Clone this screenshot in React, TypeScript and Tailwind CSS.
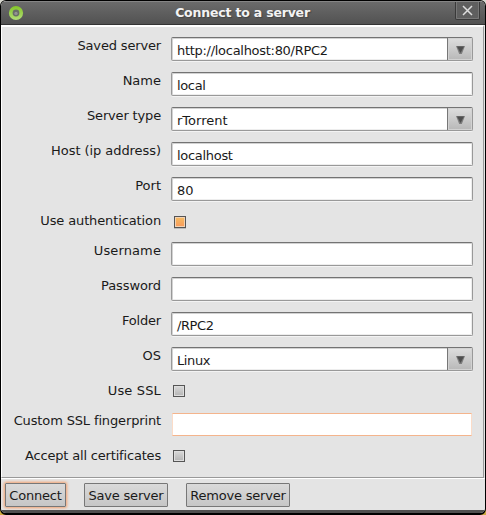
import React from "react";

type Row = {
  label: string;
  kind: "select" | "input" | "check" | "plain";
  value?: string;
  checked?: boolean;
  height: string;
  track?: string;
  valueTrack?: string;
};

const rows: Row[] = [
  { label: "Saved server", kind: "select", value: "http://localhost:80/RPC2", height: "h-[35px]", track: "tracking-[-0.16px]", valueTrack: "tracking-[-0.29px]" },
  { label: "Name", kind: "input", value: "local", height: "h-[35px]", valueTrack: "tracking-[-0.35px]" },
  { label: "Server type", kind: "select", value: "rTorrent", height: "h-[35px]", track: "tracking-[-0.16px]" },
  { label: "Host (ip address)", kind: "input", value: "localhost", height: "h-[35px]", track: "tracking-[-0.06px]", valueTrack: "tracking-[-0.3px]" },
  { label: "Port", kind: "input", value: "80", height: "h-[35px]" },
  { label: "Use authentication", kind: "check", checked: true, height: "h-[30px]", track: "tracking-[-0.12px]" },
  { label: "Username", kind: "input", value: "", height: "h-[35px]", track: "tracking-[0.12px]" },
  { label: "Password", kind: "input", value: "", height: "h-[35px]", track: "tracking-[-0.1px]" },
  { label: "Folder", kind: "input", value: "/RPC2", height: "h-[35px]", track: "tracking-[-0.2px]", valueTrack: "tracking-[-0.4px]" },
  { label: "OS", kind: "select", value: "Linux", height: "h-[35px]", valueTrack: "tracking-[-0.4px]" },
  { label: "Use SSL", kind: "check", height: "h-[30px]", track: "tracking-[0.15px]" },
  { label: "Custom SSL fingerprint", kind: "plain", height: "h-[35px]", track: "tracking-[-0.14px]" },
  { label: "Accept all certificates", kind: "check", height: "h-[30px]", track: "tracking-[-0.18px]" },
];

function Field({ row }: { row: Row }) {
  if (row.kind === "check") {
    return row.checked ? (
      <div className="ml-[3px] mt-1 h-3 w-3 border border-[#555] bg-linear-to-b from-[#f5bd62] to-[#f99a5c] shadow-[inset_0_0_0_1px_#f3d3b4,0_1px_0_#bdbdbd]" />
    ) : (
      <div className="ml-[2px] mt-[3px] h-3 w-3 border border-[#555] bg-linear-to-b from-[#d9d9d9] to-[#b4b4b4] shadow-[inset_0_0_0_1px_#dedede]" />
    );
  }
  if (row.kind === "plain") {
    return (
      <div className="ml-px mt-px h-[23px] w-[300px] border border-x-[#fbdcc8] border-y-[#f4b48c] bg-white" />
    );
  }
  return (
    <div className="flex h-6 w-[302px] rounded-[2px] border border-[#999] border-t-[#737373] bg-white shadow-[inset_1px_1px_0_#d2d2d2,inset_-1px_-1px_0_#ededed,0_1px_0_#f3f3f3]">
      <span className={`min-w-0 grow whitespace-pre pl-[5px] pt-[5px] leading-4 ${row.valueTrack ?? ""}`}>{row.value}</span>
      {row.kind === "select" && (
        <div className="flex w-[25px] items-center justify-center border-l border-[#777] bg-linear-to-b from-[#dedede] to-[#b8b8b8] pl-px shadow-[inset_0_0_0_1px_#d2d2d2]">
          <svg width="9" height="8" viewBox="0 0 9 8" className="mt-[2px]">
            <path d="M0 0h9L5.8 8H3.2z" fill="#7d7d7d" />
            <path d="M1 .5h7L4.5 7z" fill="#4e4e4e" />
          </svg>
        </div>
      )}
    </div>
  );
}

function Button({ text, className }: { text: string; className: string }) {
  return (
    <button
      className={`h-6 rounded-[1px] border border-[#777] bg-linear-to-b from-[#dadada] to-[#c6c6c6] pt-px leading-4 tracking-[-0.2px] whitespace-nowrap ${className}`}
    >
      {text}
    </button>
  );
}

export default function App() {
  return (
    <div className="h-[515px] w-[486px] bg-linear-to-b from-[#d8d8d0] to-[#d0ab3f] font-['DejaVu_Sans',sans-serif] text-[13px] text-[#1a1a1a]">
      <div className="flex h-full flex-col overflow-hidden rounded-[6px] border-t border-r border-b-2 border-l border-black bg-[#e4e4e4]">
        <header className="flex h-[24px] shrink-0 border-t border-b border-t-[#858585] border-b-[#333] bg-linear-to-b from-[#6b6b6b] to-[#525252] pl-[7px]">
          <svg width="16" height="16" viewBox="0 0 16 16" className="mt-[3px]">
            <defs>
              <linearGradient id="ring" x1="0" y1="0" x2="0" y2="1">
                <stop offset="0" stopColor="#83c627" />
                <stop offset="1" stopColor="#b2dc78" />
              </linearGradient>
            </defs>
            <circle cx="8" cy="8" r="7.1" fill="url(#ring)" />
            <circle cx="8" cy="8" r="3.4" fill="#696e67" />
            <circle cx="8" cy="8.4" r="1.7" fill="#929292" />
          </svg>
          <h1 className="grow pl-[6px] pt-[3px] text-center text-[12.5px] leading-4 font-bold tracking-[-0.19px] text-[#f3f3f3] [text-shadow:1px_1px_1px_#444]">
            Connect to a server
          </h1>
          <div className="mr-[5px] flex h-[18px] w-[25px] items-start justify-center rounded-b-[2px] border border-t-0 border-[#393939] bg-[#5f5f5f] shadow-[inset_1px_0_0_#777,inset_-1px_-1px_0_#777]">
            <svg width="11" height="11" viewBox="0 0 11 11" className="mt-[3px]">
              <path d="M1 1l9 9M10 1l-9 9" stroke="#dedede" strokeWidth="1.5" />
            </svg>
          </div>
        </header>
        <main className="mr-px flex h-[453px] shrink-0 flex-col border border-t-2 border-t-white border-r-[#999] border-b-[#999] border-l-white pt-[10px]">
          {rows.map((row) => (
            <div key={row.label} className={`flex shrink-0 ${row.height}`}>
              <div className={`w-[159px] shrink-0 whitespace-nowrap pt-px text-right leading-4 ${row.track ?? ""}`}>{row.label}</div>
              <div className="ml-[10px]">
                <Field row={row} />
              </div>
            </div>
          ))}
        </main>
        <footer className="flex h-[32px] shrink-0 border-t border-white pt-1 pl-1">
          <Button text="Connect" className="w-[61px] shadow-[0_0_3px_1px_#f4a06c]" />
          <Button text="Save server" className="ml-[18px] w-[84px]" />
          <Button text="Remove server" className="ml-[18px] w-[104px]" />
        </footer>
        <div className="h-[3px] shrink-0 bg-[#505050]" />
      </div>
    </div>
  );
}
